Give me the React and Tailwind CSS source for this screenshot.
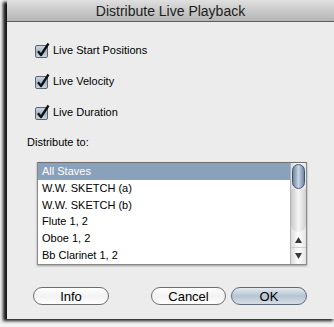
import React from "react";

const staves = [
  "All Staves",
  "W.W. SKETCH (a)",
  "W.W. SKETCH (b)",
  "Flute 1, 2",
  "Oboe 1, 2",
  "Bb Clarinet 1, 2",
];

function CheckBox() {
  return (
    <svg width="13" height="15" viewBox="0 0 13 15" className="shrink-0 overflow-visible">
      <defs>
        <linearGradient id="cbg" x1="0" y1="0" x2="0" y2="1">
          <stop offset="0" stopColor="#d0d9e3" />
          <stop offset="0.5" stopColor="#a5b5c7" />
          <stop offset="1" stopColor="#ccd7e2" />
        </linearGradient>
      </defs>
      <rect x="0.5" y="2.5" width="12" height="12" rx="1.5" fill="url(#cbg)" stroke="#5d6670" />
      <path d="M3 8.2 L6 12 L13.5 0.5" fill="none" stroke="#111" strokeWidth="2.3" strokeLinejoin="round" />
    </svg>
  );
}

function CheckRow({ label }) {
  return (
    <div className="flex items-center h-[16px] gap-[5px]">
      <CheckBox />
      <span className="text-[11px] text-black leading-none">{label}</span>
    </div>
  );
}

function Button({ children, primary, className }) {
  return (
    <div
      className={`h-[18px] rounded-full border flex items-center justify-center text-[13px] text-black leading-none ${
        primary
          ? "border-[#5f6b78] bg-gradient-to-b from-[#e4eaf0] via-[#b7c4d2] to-[#d5dee7]"
          : "border-[#6e6e6e] bg-gradient-to-b from-[#ffffff] via-[#f2f2f2] to-[#ffffff]"
      } ${className}`}
    >
      {children}
    </div>
  );
}

function ScrollBar() {
  return (
    <div className="w-[16px] flex flex-col border-l border-[#b5b5b5] bg-gradient-to-r from-[#dcdcdc] via-[#ffffff] to-[#e4e4e4]">
      <div className="px-[1px] pt-[1px]">
        <div className="h-[25px] rounded-[7px] border border-[#3e5470] bg-gradient-to-r from-[#6f86a3] via-[#c9d6e4] to-[#6f86a3]" />
      </div>
      <div className="flex-1 rounded-b-[8px] bg-gradient-to-r from-[#c8c8c8] via-[#f6f6f6] to-[#cfcfcf]" />
      <div className="h-[16px] flex items-center justify-center border-b border-[#cfcfcf]">
        <svg width="7" height="6" viewBox="0 0 7 6"><path d="M3.5 0 L7 6 L0 6 Z" fill="#3a3a3a" /></svg>
      </div>
      <div className="h-[16px] flex items-center justify-center">
        <svg width="7" height="6" viewBox="0 0 7 6"><path d="M0 0 L7 0 L3.5 6 Z" fill="#3a3a3a" /></svg>
      </div>
    </div>
  );
}

export default function App() {
  return (
    <div
      className="w-[334px] h-[327px] bg-[#f3f3f3] overflow-hidden"
      style={{ fontFamily: '"Liberation Sans", Arial, sans-serif' }}
    >
      <div className="ml-[7px] w-[330px] h-[319px] flex flex-col bg-[#ececec] shadow-[-4px_2px_3px_rgba(0,0,0,0.9)]">
        <div className="h-[22px] shrink-0 border-b border-[#5c5c5c] bg-gradient-to-b from-[#e0e0e0] to-[#b4b4b4] flex items-center justify-center">
          <span className="text-[14px] text-[#1c1c1c] leading-none pr-[3px]">Distribute Live Playback</span>
        </div>

        <div className="flex flex-col pl-[28px] pt-[20px] gap-[15px]">
          <CheckRow label="Live Start Positions" />
          <CheckRow label="Live Velocity" />
          <CheckRow label="Live Duration" />
        </div>

        <div className="pl-[20px] mt-[14px] h-[16px] flex items-center">
          <span className="text-[11px] text-black leading-none">Distribute to:</span>
        </div>

        <div className="ml-[30px] mt-[12px] w-[270px] h-[103px] flex border border-[#8a8a8a] border-t-[#707070] bg-white shadow-[0_1px_2px_rgba(0,0,0,0.35)]">
          <div className="flex-1 flex flex-col">
            {staves.map((s, i) => (
              <div
                key={s}
                className={`h-[17px] flex items-center pl-[4px] text-[11px] leading-none ${
                  i === 0 ? "bg-[#8aa1bc] text-white" : "text-black"
                }`}
              >
                {s}
              </div>
            ))}
          </div>
          <ScrollBar />
        </div>

        <div className="flex mt-[22px] pl-[26px]">
          <Button className="w-[76px]">Info</Button>
          <Button className="w-[75px] ml-[42px]">Cancel</Button>
          <Button primary className="w-[76px] ml-[5px]">OK</Button>
        </div>
      </div>
    </div>
  );
}
